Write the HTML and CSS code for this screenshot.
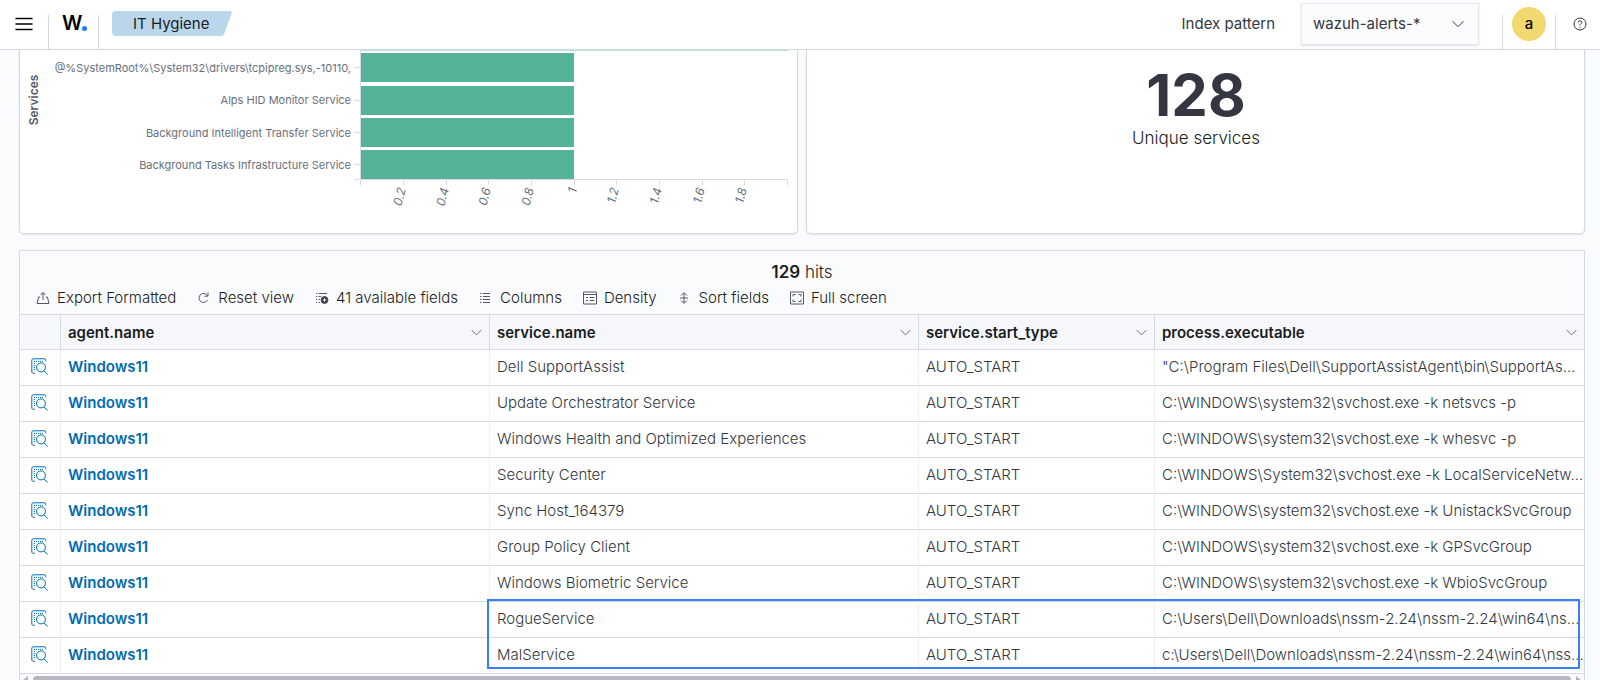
FILE: index.html
```
<!DOCTYPE html>
<html lang="en">

<head>
  <meta charset="utf-8">
  <title>IT Hygiene</title>
  <link rel="stylesheet" href="styles.css">
</head>

<body>
  <svg class="sprite" aria-hidden="true">
    <symbol id="inspect" viewBox="0 0 18 18">
      <path d="M.8 14.2V2.3Q.8.8 2.3.8H13Q14.8.8 14.8 2.4V3.2M.8 14.2Q1 15.4 3.8 15.4" />
      <path d="M3 3.4H12M3.4 5V13" stroke-dasharray="1 1" />
      <circle cx="10" cy="9.4" r="4.5" />
      <path d="M13 13L16.6 16.4" />
    </symbol>
    <symbol id="chevron" viewBox="0 0 12 8">
      <path d="M.5 1.2L6 6.7L11.5 1.2" />
    </symbol>
  </svg>

  <header class="header">
    <button type="button" class="menu" aria-label="Menu">
      <svg width="18" height="14" viewBox="0 0 18 14"><path d="M.5 1.5H17.5M.5 7H17.5M.5 12.5H17.5" /></svg>
    </button>
    <a class="logo" href="#" aria-label="Home">W<span class="dot"></span></a>
    <a class="crumb" href="#">IT Hygiene</a>
    <label class="pattern-label" for="pattern">Index pattern</label>
    <div class="select">
      <select id="pattern">
        <option>wazuh-alerts-*</option>
      </select>
      <svg class="chevron"><use href="#chevron" /></svg>
    </div>
    <div class="user"><button type="button" class="avatar">a</button></div>
    <button type="button" class="help" aria-label="Help">
      <svg width="14" height="14" viewBox="0 0 14 14">
        <circle cx="7" cy="7" r="6" />
        <path d="M5.2 5.6Q5.2 3.8 7 3.8Q8.9 3.8 8.9 5.4Q8.9 6.5 7.6 6.9Q7 7.2 7 8.3M7 9.6V10.7" />
      </svg>
    </button>
  </header>

  <main>
    <div class="panels">
      <section class="panel">
        <svg class="chart" width="776" height="183" viewBox="0 0 776 183">
          <path class="bar bar-cut" d="M340 0H767V1H340Z" />
          <g class="bar">
            <rect x="340" y="3" width="213" height="29" />
            <rect x="340" y="36" width="213" height="29" />
            <rect x="340" y="68" width="213" height="29" />
            <rect x="340" y="100" width="213" height="29" />
          </g>
          <path class="axis" d="M339.5 0V135M333 129.5H766.5M333 17.5H339M333 50.5H339M333 82.5H339M333 114.5H339" />
          <path class="axis" d="M382.5 130V135M425.5 130V135M467.5 130V135M510.5 130V135M553.5 130V135M595.5 130V135M638.5 130V135M681.5 130V135M723.5 130V135M766.5 130V135" />
          <g class="names">
            <text x="330" y="22">@%SystemRoot%\System32\drivers\tcpipreg.sys,-10110,</text>
            <text x="330" y="54">Alps HID Monitor Service</text>
            <text x="330" y="87">Background Intelligent Transfer Service</text>
            <text x="330" y="119">Background Tasks Infrastructure Service</text>
          </g>
          <g class="ticks">
            <text transform="translate(385 139) rotate(-75)">0.2</text>
            <text transform="translate(428 139) rotate(-75)">0.4</text>
            <text transform="translate(470 139) rotate(-75)">0.6</text>
            <text transform="translate(513 139) rotate(-75)">0.8</text>
            <text transform="translate(556 139) rotate(-75)">1</text>
            <text transform="translate(598 139) rotate(-75)">1.2</text>
            <text transform="translate(641 139) rotate(-75)">1.4</text>
            <text transform="translate(684 139) rotate(-75)">1.6</text>
            <text transform="translate(726 139) rotate(-75)">1.8</text>
          </g>
          <text class="axis-title" transform="translate(17 50) rotate(-90)">Services</text>
        </svg>
      </section>
      <section class="panel metric">
        <div class="value">128</div>
        <div>Unique services</div>
      </section>
    </div>

    <section class="grid">
      <div class="hits"><strong>129</strong> hits</div>
      <div class="toolbar">
        <button type="button">
          <svg viewBox="0 0 14 14"><path d="M4.2 6H2.6L1 12.5H13L11.4 6H9.8M7 9V1.5M4.5 4L7 1.5L9.5 4" /></svg>
          Export Formatted
        </button>
        <button type="button">
          <svg viewBox="0 0 14 14"><path d="M10.5 9A4.5 4.5 0 1 1 9.5 3.6L10.8 5M11 1.5V5.2H7.4" /></svg>
          Reset view
        </button>
        <button type="button">
          <svg viewBox="0 0 14 14">
            <path d="M1 2.5H2M3.5 2.5H12M1 5.5H2M3.5 5.5H6M1 8.5H2M3.5 8.5H5M1 11.5H2M3.5 11.5H5" />
            <circle class="solid" cx="9.5" cy="9" r="3.5" />
            <path class="light" d="M7.8 9H11.2M9.5 7.3V10.7" />
          </svg>
          41 available fields
        </button>
        <button type="button">
          <svg viewBox="0 0 14 14"><path d="M1 2.5H2.5M4 2.5H11M1 5.5H2.5M4 5.5H11M1 8.5H2.5M4 8.5H11M1 11.5H2.5M4 11.5H11" /></svg>
          Columns
        </button>
        <button type="button">
          <svg viewBox="0 0 14 14"><path d="M.5 1H13.5V13H.5ZM.5 3.5H13.5M3 6.5H5M6.5 6.5H11.5M3 9.5H5M6.5 9.5H11.5" /></svg>
          Density
        </button>
        <button type="button">
          <svg viewBox="0 0 14 14"><path d="M6 2V12M3 4.6L6 1.6L9 4.6M3 9.4L6 12.4L9 9.4M2 7H10" /></svg>
          Sort fields
        </button>
        <button type="button">
          <svg viewBox="0 0 14 14"><path d="M.5 1H13.5V13H.5ZM3 5.5V3.5H5.5M8.5 3.5H11V5.5M11 8.5V10.5H8.5M5.5 10.5H3V8.5" /></svg>
          Full screen
        </button>
      </div>

      <div class="table-wrap">
        <table>
          <colgroup>
            <col class="col-inspect">
            <col class="col-name">
            <col class="col-name">
            <col class="col-type">
            <col>
          </colgroup>
          <thead>
            <tr>
              <th></th>
              <th><div class="head">agent.name <svg><use href="#chevron" /></svg></div></th>
              <th><div class="head">service.name <svg><use href="#chevron" /></svg></div></th>
              <th><div class="head">service.start_type <svg><use href="#chevron" /></svg></div></th>
              <th><div class="head">process.executable <svg><use href="#chevron" /></svg></div></th>
            </tr>
          </thead>
          <tbody>
            <tr>
              <td><button type="button" class="inspect" aria-label="Inspect"><svg><use href="#inspect" /></svg></button></td>
              <td><a href="#">Windows11</a></td>
              <td>Dell SupportAssist</td>
              <td>AUTO_START</td>
              <td>"C:\Program Files\Dell\SupportAssistAgent\bin\SupportAs…</td>
            </tr>
            <tr>
              <td><button type="button" class="inspect" aria-label="Inspect"><svg><use href="#inspect" /></svg></button></td>
              <td><a href="#">Windows11</a></td>
              <td>Update Orchestrator Service</td>
              <td>AUTO_START</td>
              <td>C:\WINDOWS\system32\svchost.exe -k netsvcs -p</td>
            </tr>
            <tr>
              <td><button type="button" class="inspect" aria-label="Inspect"><svg><use href="#inspect" /></svg></button></td>
              <td><a href="#">Windows11</a></td>
              <td>Windows Health and Optimized Experiences</td>
              <td>AUTO_START</td>
              <td>C:\WINDOWS\system32\svchost.exe -k whesvc -p</td>
            </tr>
            <tr>
              <td><button type="button" class="inspect" aria-label="Inspect"><svg><use href="#inspect" /></svg></button></td>
              <td><a href="#">Windows11</a></td>
              <td>Security Center</td>
              <td>AUTO_START</td>
              <td>C:\WINDOWS\System32\svchost.exe -k LocalServiceNetw…</td>
            </tr>
            <tr>
              <td><button type="button" class="inspect" aria-label="Inspect"><svg><use href="#inspect" /></svg></button></td>
              <td><a href="#">Windows11</a></td>
              <td>Sync Host_164379</td>
              <td>AUTO_START</td>
              <td>C:\WINDOWS\system32\svchost.exe -k UnistackSvcGroup</td>
            </tr>
            <tr>
              <td><button type="button" class="inspect" aria-label="Inspect"><svg><use href="#inspect" /></svg></button></td>
              <td><a href="#">Windows11</a></td>
              <td>Group Policy Client</td>
              <td>AUTO_START</td>
              <td>C:\WINDOWS\system32\svchost.exe -k GPSvcGroup</td>
            </tr>
            <tr>
              <td><button type="button" class="inspect" aria-label="Inspect"><svg><use href="#inspect" /></svg></button></td>
              <td><a href="#">Windows11</a></td>
              <td>Windows Biometric Service</td>
              <td>AUTO_START</td>
              <td>C:\WINDOWS\system32\svchost.exe -k WbioSvcGroup</td>
            </tr>
            <tr>
              <td><button type="button" class="inspect" aria-label="Inspect"><svg><use href="#inspect" /></svg></button></td>
              <td><a href="#">Windows11</a></td>
              <td>RogueService</td>
              <td>AUTO_START</td>
              <td>C:\Users\Dell\Downloads\nssm-2.24\nssm-2.24\win64\ns…</td>
            </tr>
            <tr>
              <td><button type="button" class="inspect" aria-label="Inspect"><svg><use href="#inspect" /></svg></button></td>
              <td><a href="#">Windows11</a></td>
              <td>MalService</td>
              <td>AUTO_START</td>
              <td>c:\Users\Dell\Downloads\nssm-2.24\nssm-2.24\win64\nss…</td>
            </tr>
          </tbody>
        </table>
        <div class="highlight"></div>
      </div>
      <div class="scrollbar"><div class="thumb"></div></div>
    </section>
  </main>
</body>

</html>
```
FILE: styles.css
```
*, *::before, *::after {
  box-sizing: border-box;
}
body {
  margin: 0;
  height: 100vh;
  overflow: hidden;
  background: #fafbfd;
  color: #343741;
  font: 300 15px/20px Inter, sans-serif;
}
button, select {
  font: inherit;
  color: inherit;
  background: none;
  border: 0;
  padding: 0;
  cursor: pointer;
}
a {
  color: inherit;
  text-decoration: none;
}
svg {
  display: block;
  flex: none;
  fill: none;
  stroke: currentColor;
}
.sprite {
  position: absolute;
  width: 0;
  height: 0;
}

/* header */
.header {
  display: flex;
  align-items: flex-start;
  height: 50px;
  background: white;
  border-bottom: 1px solid #d3dae6;
  font-weight: 400;
}
.menu {
  width: 48px;
  height: 47px;
  padding-left: 15px;
  color: black;
}
.menu svg {
  stroke-width: 1.5;
}
.logo {
  display: flex;
  align-items: flex-start;
  width: 51px;
  height: 34px;
  margin-top: 15px;
  padding-left: 13px;
  border-left: 1px solid #d3dae6;
  border-right: 1px solid #d3dae6;
  color: black;
  font-size: 20px;
  font-weight: 600;
  line-height: 17px;
}
.dot {
  width: 5px;
  height: 5px;
  margin-top: 11px;
  border-radius: 50%;
  background: #1f7bff;
}
.crumb {
  position: relative;
  z-index: 0;
  width: 112px;
  height: 25px;
  margin: 11px auto 0 13px;
  padding-left: 21px;
  border-radius: 4px;
  background: #b9d6ea;
  color: #1a1c21;
  line-height: 25px;
}
.crumb::before {
  content: "";
  position: absolute;
  z-index: -1;
  top: 0;
  right: -4px;
  width: 60px;
  height: 25px;
  border-radius: 3px;
  background: #b9d6ea;
  transform: skewX(-20deg);
}
.pattern-label {
  margin: 14px 26px 0 0;
}
.select {
  position: relative;
  margin: 3px 23px 0 0;
}
.select select {
  width: 178px;
  height: 42px;
  padding-left: 11px;
  appearance: none;
  background: #fbfcfd;
  border: 1px solid #e3e7f0;
  box-shadow: 0 1px 2px rgba(52, 55, 65, 0.15);
}
.chevron {
  position: absolute;
  right: 15px;
  top: 17px;
  width: 12px;
  height: 8px;
  pointer-events: none;
}
.user {
  width: 54px;
  height: 34px;
  margin-top: 15px;
  border-left: 1px solid #d3dae6;
  border-right: 1px solid #d3dae6;
}
.avatar {
  display: block;
  width: 34px;
  height: 34px;
  margin: -8px auto 0;
  border-radius: 50%;
  background: #f1d86f;
  color: black;
  font-weight: 500;
}
.help {
  width: 44px;
  height: 47px;
  padding-left: 17px;
}

/* dashboard panels */
main {
  padding: 0 15px 0 19px;
}
.panels {
  display: grid;
  grid-template-columns: 1fr 1fr;
  gap: 8px;
}
.panel {
  min-width: 0;
  padding-left: 1px;
  background: white;
  border: 1px solid #d3dae6;
  border-top: 0;
  border-radius: 0 0 5px 5px;
  box-shadow: 0 1px 2px rgba(52, 55, 65, 0.12);
}
.chart text {
  stroke: none;
  fill: #69707d;
}
.bar {
  stroke: none;
  fill: #54b399;
}
.bar-cut {
  opacity: 0.4;
}
.axis {
  stroke: #d8dbdd;
}
.names {
  font-size: 11px;
  font-weight: 400;
  text-anchor: end;
}
.ticks {
  font-size: 12px;
  font-weight: 400;
  font-style: italic;
  text-anchor: end;
}
.chart .axis-title {
  font-size: 12px;
  font-weight: 600;
  text-anchor: middle;
  fill: #535966;
}
.metric {
  padding-top: 14px;
  text-align: center;
  color: #1a1c21;
  font-size: 17px;
  line-height: 24px;
}
.value {
  color: #343741;
  font-size: 58px;
  font-weight: 700;
  line-height: 62px;
}

/* data grid */
.grid {
  margin-top: 16px;
  border: 1px solid #d3dae6;
  border-bottom: 0;
}
.hits {
  padding-top: 9px;
  text-align: center;
  color: #1a1c21;
  font-size: 17px;
  line-height: 24px;
}
.hits strong {
  font-weight: 600;
}
.toolbar {
  display: flex;
  gap: 21px;
  padding: 4px 16px 6px;
}
.toolbar button {
  display: flex;
  align-items: center;
  gap: 7px;
  color: #1a1c21;
}
.toolbar svg {
  width: 14px;
  height: 14px;
  color: #535966;
}
.toolbar .solid {
  fill: #343741;
}
.toolbar .light {
  stroke: white;
}
.table-wrap {
  position: relative;
}
table {
  width: 100%;
  table-layout: fixed;
  border-collapse: separate;
  border-spacing: 0;
  background: white;
}
.col-inspect {
  width: 41px;
}
.col-name {
  width: 429px;
}
.col-type {
  width: 236px;
}
th, td {
  height: 36px;
  padding: 0 7px;
  border-bottom: 1px solid #d3dae6;
  border-right: 1px solid #edf0f5;
  text-align: left;
  white-space: nowrap;
}
th {
  padding-top: 1px;
  background: #f5f7fa;
  border-top: 1px solid #d3dae6;
  border-right-color: #d3dae6;
  color: #1a1c21;
  font-weight: 600;
}
td {
  padding-bottom: 1px;
}
th:last-child, td:last-child {
  border-right: 0;
}
td a {
  color: #006bb4;
  font-weight: 600;
}
.head {
  display: flex;
  align-items: center;
  justify-content: space-between;
}
.head svg {
  width: 11px;
  height: 7px;
  color: #535966;
}
.inspect {
  display: block;
  margin-left: 4px;
  color: #006bb4;
}
.inspect svg {
  width: 18px;
  height: 18px;
}
.highlight {
  position: absolute;
  left: 467px;
  right: 4px;
  bottom: 5px;
  height: 70px;
  border: 2px solid #3a80f2;
  pointer-events: none;
}
.scrollbar {
  display: flex;
  align-items: center;
  justify-content: space-between;
  padding: 2px 3px 0;
}
.scrollbar::before, .scrollbar::after {
  content: "";
  border: 4px solid transparent;
}
.scrollbar::before {
  border-left: 0;
  border-right: 5px solid #b4b7bf;
}
.scrollbar::after {
  border-right: 0;
  border-left: 5px solid #b4b7bf;
}
.thumb {
  flex: 1;
  height: 8px;
  margin: 0 5px;
  border-radius: 4px;
  background: #b4b7bf;
}
```
